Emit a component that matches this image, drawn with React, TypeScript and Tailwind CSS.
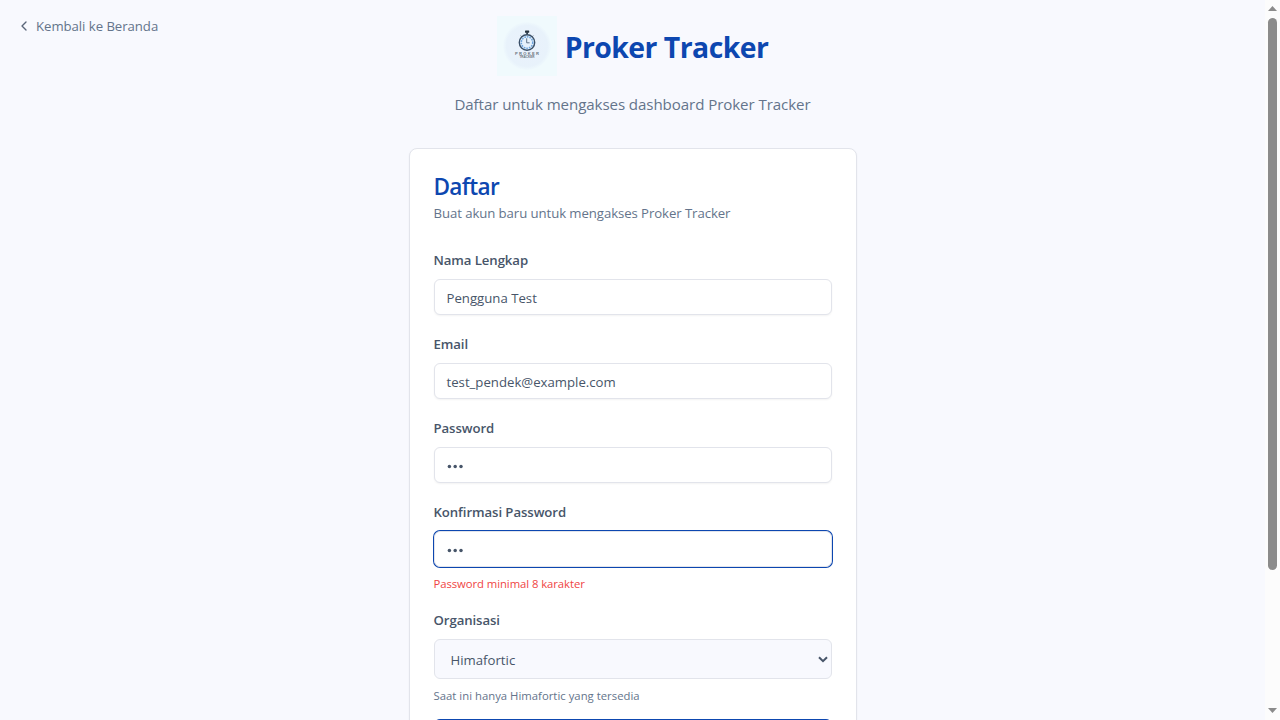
import type { ReactNode } from 'react';
import { ChevronLeft } from 'lucide-react';

function Logo() {
  return (
    <svg width="60" height="60" viewBox="0 0 60 60" className="shrink-0">
      <defs>
        <radialGradient id="halo">
          <stop offset="0" stopColor="#eaf1fc" />
          <stop offset="0.85" stopColor="#e8f2fb" />
          <stop offset="1" stopColor="#eff9fd" />
        </radialGradient>
      </defs>
      <rect width="60" height="60" fill="#f0fafd" />
      <circle cx="30" cy="30" r="24" fill="url(#halo)" />
      <rect x="28" y="14.4" width="4.2" height="2.4" rx="0.6" fill="#26323f" />
      <rect x="29.2" y="16" width="1.8" height="3" fill="#34414e" />
      <path d="M23.5 19.5l1.4 1.2M36.5 19.5l-1.4 1.2" stroke="#8a98a5" strokeWidth="0.9" />
      <circle cx="30" cy="26.5" r="7.7" fill="#dcecfb" stroke="#3b5068" strokeWidth="1.4" />
      <circle cx="30" cy="26.5" r="5.7" fill="#e6f1fc" stroke="#6da3dc" strokeWidth="1.5" strokeDasharray="1.6 1" />
      <path d="M29.7 22.3V26.8H32.6" fill="none" stroke="#53677d" strokeWidth="0.9" />
      <text x="18" y="38.9" textLength="24" fontSize="4.1" fontWeight="700" fontFamily="Liberation Sans, sans-serif" fill="#6c7781">PROKER</text>
      <text x="22.5" y="42.2" textLength="15" fontSize="3.1" fontWeight="700" fontFamily="Liberation Sans, sans-serif" fill="#6c7781">TRACKER</text>
    </svg>
  );
}

function Field({ label, children }: { label: string; children: ReactNode }) {
  return (
    <div className="flex flex-col gap-2">
      <label className="pb-0.5 text-[13.2px] leading-[18px] font-semibold tracking-[-0.08px]">{label}</label>
      {children}
    </div>
  );
}

function Dots() {
  return (
    <svg width="18" height="6" viewBox="0 0 18 6" fill="#475569">
      <circle cx="2.4" cy="2.5" r="1.75" />
      <circle cx="8.2" cy="2.5" r="1.75" />
      <circle cx="14" cy="2.5" r="1.75" />
    </svg>
  );
}

const box = 'flex h-9 items-center rounded-md border border-[#e2e4eb] bg-white px-3 pt-[3px] text-[13.2px] shadow-xs';

function Scrollbar() {
  return (
    <div className="flex w-[15px] shrink-0 flex-col items-center bg-[#fcfcfc]">
      <svg width="9" height="5" viewBox="0 0 9 5" className="mt-1.5 shrink-0" fill="#8b8b8b">
        <path d="M4.5 0L9 5H0z" />
      </svg>
      <div className="mt-[7px] h-[552px] w-[9px] shrink-0 rounded-full bg-[#8b8b8b]" />
      <svg width="9" height="5" viewBox="0 0 9 5" className="mt-auto mb-[7px] shrink-0" fill="#8b8b8b">
        <path d="M0 0H9L4.5 5z" />
      </svg>
    </div>
  );
}

export default function App() {
  return (
    <div className="flex h-[720px] w-[1280px] overflow-hidden bg-[#f8f9fe] font-['Open_Sans','Noto_Sans',sans-serif] text-[#475569]">
      <div className="relative flex h-[720px] min-w-0 flex-1 flex-col items-center overflow-hidden pt-4">
        <a className="absolute top-4 left-4 flex items-center gap-1 text-[13.2px] leading-5 tracking-[-0.05px] text-[#64748b]">
          <ChevronLeft size={16} className="text-[#596579]" />
          <span>Kembali ke Beranda</span>
        </a>
        <div className="flex h-[60px] items-center gap-2">
          <Logo />
          <h1 className="pt-px text-[28.4px] leading-9 font-bold tracking-[-0.54px] text-[#0d47b0]">Proker Tracker</h1>
        </div>
        <p className="mt-4 text-[15.1px] leading-6 tracking-[-0.08px] text-[#64748b]">Daftar untuk mengakses dashboard Proker Tracker</p>
        <div className="mt-8 w-[448px] shrink-0 rounded-lg border border-[#e2e4eb] bg-white p-6 shadow-xs">
          <h2 className="pt-0.5 text-[22.6px] leading-6 font-semibold tracking-[-0.7px] text-[#0d47b0]">Daftar</h2>
          <p className="mt-1 text-[13.2px] leading-5 tracking-[-0.08px] text-[#64748b]">Buat akun baru untuk mengakses Proker Tracker</p>
          <form className="mt-7 flex flex-col gap-5">
            <Field label="Nama Lengkap">
              <div className={box}>Pengguna Test</div>
            </Field>
            <Field label="Email">
              <div className={box}>test_pendek@example.com</div>
            </Field>
            <Field label="Password">
              <div className={box}><Dots /></div>
            </Field>
            <Field label="Konfirmasi Password">
              <div className="flex h-9 items-center rounded-md border border-[#e2e4eb] bg-white px-3 pt-[3px] ring-1 ring-[#0d47b0]"><Dots /></div>
              <p className="-mb-px pt-px text-[11.3px] leading-4 tracking-[-0.06px] text-[#ef4444]">Password minimal 8 karakter</p>
            </Field>
            <Field label="Organisasi">
              <div className="flex h-10 items-center justify-between rounded-md border border-[#e2e4eb] bg-[#f8f9fe] pr-[3px] pl-4 text-[13.2px]">
                <span className="pt-[3px]">Himafortic</span>
                <svg width="10" height="7" viewBox="0 0 10 7" fill="none" stroke="#475569" strokeWidth="2">
                  <path d="M1 1.2L5 5.2L9 1.2" />
                </svg>
              </div>
              <p className="-mb-px pt-px text-[11.3px] leading-4 tracking-[0.02px] text-[#64748b]">Saat ini hanya Himafortic yang tersedia</p>
            </Field>
            <button type="button" className="-mt-1 h-10 rounded-md bg-[#0d47b0]" />
          </form>
        </div>
      </div>
      <Scrollbar />
    </div>
  );
}
